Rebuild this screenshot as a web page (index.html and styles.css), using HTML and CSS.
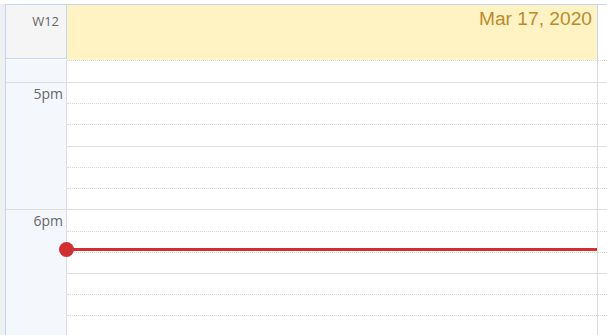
FILE: index.html
```html
<!DOCTYPE html>
<html lang="en">
<head>
    <meta charset="UTF-8">
    <meta name="viewport" content="width=device-width, initial-scale=1.0">
    <title>Day View</title>
    <link rel="stylesheet" href="styles.css">
</head>
<body>
    <div class="page">
        <div class="gutter"></div>
        <div class="scheduler">
            <div class="head">
                <div class="week">W12</div>
                <div class="date">Mar 17, 2020</div>
                <div class="head-rest"></div>
            </div>
            <div class="allday">
                <div class="allday-time"></div>
                <div class="allday-cell"></div>
                <div class="allday-cell rest"></div>
            </div>
            <div class="grid">
                <div class="times">
                    <div class="hour">5pm</div>
                    <div class="hour">6pm</div>
                </div>
                <div class="day">
                    <div class="slot"></div><div class="slot"></div><div class="slot"></div>
                    <div class="slot"></div><div class="slot"></div><div class="slot"></div>
                    <div class="slot"></div><div class="slot"></div><div class="slot"></div>
                    <div class="slot"></div><div class="slot"></div><div class="slot"></div>
                    <!-- current time marker -->
                    <div class="now"><span class="now-dot"></span></div>
                </div>
                <div class="day rest">
                    <div class="slot"></div><div class="slot"></div><div class="slot"></div>
                    <div class="slot"></div><div class="slot"></div><div class="slot"></div>
                    <div class="slot"></div><div class="slot"></div><div class="slot"></div>
                    <div class="slot"></div><div class="slot"></div><div class="slot"></div>
                </div>
            </div>
        </div>
    </div>
</body>
</html>
```

FILE: styles.css
```css
html, body {
    margin: 0;
    height: 100%;
    overflow: hidden;
    background: #fff;
}
body {
    font-family: "Open Sans", sans-serif;
}
.page {
    display: flex;
    height: 100%;
    padding-top: 4px;
    box-sizing: border-box;
}
.gutter {
    width: 5px;
    background: #eef0f2;
}
.scheduler {
    flex: 1;
    border-top: 1px solid #c4d6f4;
    border-left: 1px solid #c4d6f4;
    overflow: hidden;
}
.head {
    display: flex;
    height: 55px;
}
.week {
    width: 61px;
    height: 54px;
    background: #f5f5f5;
    border-right: 1px solid #c4d6f4;
    border-bottom: 1px solid #c4d6f4;
    text-align: right;
    padding: 7px 7px 0 0;
    box-sizing: border-box;
    font-size: 13px;
    color: #666;
}
.date {
    width: 531px;
    background: #fff3c4;
    border-right: 1px solid #c4d6f4;
    box-sizing: border-box;
    text-align: right;
    padding: 3px 5px 0 0;
    font-family: "Liberation Sans", Arial, sans-serif;
    font-size: 19.2px;
    color: #bb8a2c;
}
.head-rest {
    flex: 1;
}
.allday {
    display: flex;
    height: 23px;
}
.allday-time {
    width: 61px;
    background: #f4f8fd;
    border-right: 1px solid #ddd;
    border-bottom: 1px solid #ddd;
    box-sizing: border-box;
}
.allday-cell {
    width: 531px;
    border-top: 1px dotted #d6d6d6;
    border-bottom: 1px solid #ddd;
    border-right: 1px solid #ddd;
    box-sizing: border-box;
}
.allday-cell.rest {
    flex: 1;
    border-right: none;
}
.grid {
    display: flex;
}
.times {
    width: 61px;
    background: #f4f8fd;
    border-right: 1px solid #ddd;
    box-sizing: border-box;
}
.hour {
    height: 127.33px;
    border-bottom: 1px solid #ddd;
    box-sizing: border-box;
    text-align: right;
    padding: 2px 3px 0 0;
    font-size: 14px;
    line-height: 18px;
    color: #666;
}
.day {
    position: relative;
    width: 531px;
    border-right: 1px solid #ddd;
    box-sizing: border-box;
}
.day.rest {
    flex: 1;
    border-right: none;
}
.slot {
    height: 21.22px;
    border-bottom: 1px dotted #d6d6d6;
    box-sizing: border-box;
}
.slot:nth-child(3n) {
    border-bottom: 1px solid #ddd;
}
.now {
    position: absolute;
    left: 0;
    right: 0;
    top: 165px;
    height: 3px;
    background: #d03030;
}
.now-dot {
    position: absolute;
    left: -8px;
    top: -6px;
    width: 15px;
    height: 15px;
    border-radius: 50%;
    background: #d03030;
}
```
